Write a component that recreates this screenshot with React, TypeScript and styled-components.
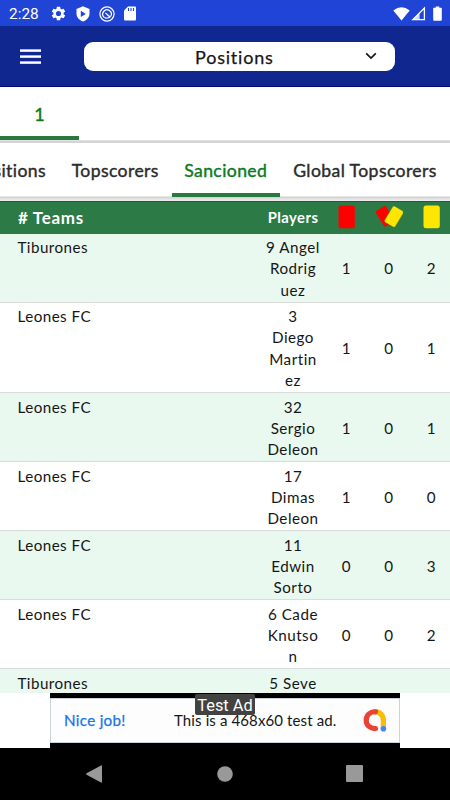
import React from "react";
import styled, { createGlobalStyle } from "styled-components";

const GlobalStyle = createGlobalStyle`
  * { box-sizing: border-box; }
  body { margin: 0; background: #fff; font-family: Lato, "Open Sans", sans-serif; color: #161616; }
`;

const Screen = styled.div`
  width: 450px;
  height: 800px;
  display: flex;
  flex-direction: column;
  overflow: hidden;
  background: #fff;
`;

const StatusBar = styled.div`
  height: 26px;
  flex: none;
  display: flex;
  align-items: center;
  justify-content: space-between;
  padding: 1px 8px 0 9px;
  background: #2044d6;
  color: #fff;
`;

const StatusGroup = styled.div<{ $gap: number }>`
  display: flex;
  align-items: center;
  gap: ${(p) => p.$gap}px;
  svg { display: block; }
`;

const Clock = styled.span`
  width: 32px;
  font: 400 15.4px/20px Roboto, sans-serif;
`;

const AppBar = styled.header`
  height: 61px;
  flex: none;
  display: flex;
  align-items: center;
  padding-left: 20px;
  background: #10278f;
  border-bottom: 1px solid #030a80;
`;

const MenuButton = styled.button`
  width: 21px;
  height: 15px;
  margin-top: 1px;
  display: flex;
  flex-direction: column;
  justify-content: space-between;
  padding: 0;
  border: 0;
  background: none;
`;

const MenuLine = styled.span`
  height: 3px;
  background: linear-gradient(#a8b1d8 1px, #fff 1px 2px, #d4d8ec 2px);
`;

const Select = styled.div`
  width: 311px;
  height: 29px;
  margin-left: 43px;
  padding: 0 18px 0 111px;
  display: flex;
  align-items: center;
  justify-content: space-between;
  border-radius: 9px;
  background: #fff;
`;

const SelectLabel = styled.span`
  padding-top: 2px;
  font-size: 18px;
  line-height: 28px;
  letter-spacing: 0.8px;
  font-weight: 400;
  -webkit-text-stroke: 0.25px #161616;
  white-space: nowrap;
`;

const GroupBar = styled.div`
  height: 56px;
  flex: none;
  display: flex;
  padding-bottom: 3px;
  background: linear-gradient(#fff 53px, #ececec 53px, #c9c9c9 55px, #e2e2e2);
`;

const GroupTab = styled.div`
  width: 79px;
  height: 53px;
  margin-right: auto;
  border-bottom: 4px solid #27793f;
  color: #0c7a1d;
  font-size: 18px;
  font-weight: 400;
  line-height: 54px;
  text-align: center;
  -webkit-text-stroke: 0.4px #0c7a1d;
`;

const TabBar = styled.nav`
  height: 58px;
  flex: none;
  display: flex;
  padding-bottom: 4px;
  background: linear-gradient(#fff 53px, #cfcfcf 54px, #e3e3e3 56px, #f0f0f0);
`;

const Tab = styled.div<{ $width: number; $active?: boolean }>`
  width: ${(p) => p.$width}px;
  height: 54px;
  flex: none;
  display: flex;
  justify-content: center;
  border-bottom: 4px solid ${(p) => (p.$active ? "#27793f" : "transparent")};
  color: ${(p) => (p.$active ? "#0c7a1d" : "#2b2b2b")};
  -webkit-text-stroke: 0.4px ${(p) => (p.$active ? "#0c7a1d" : "#2b2b2b")};
  font-size: 17.6px;
  font-weight: 400;
  line-height: 56px;
  letter-spacing: 0.4px;
  white-space: nowrap;
  &:first-child { justify-content: flex-end; padding-right: 12.5px; }
`;

const columns = "261px 64px 42.6px 42.6px 42.6px";

const HeaderRow = styled.div`
  height: 32.6px;
  flex: none;
  display: grid;
  grid-template-columns: ${columns};
  align-items: center;
  padding-bottom: 1px;
  background: #2c7a45;
  border-top: 1px solid #0b6b1d;
  color: #fff;
  font-weight: 700;
  svg { display: block; margin: 0 auto; }
`;

const TeamsHeading = styled.div`
  padding-left: 18px;
  font-size: 17px;
  letter-spacing: 0.7px;
`;

const PlayersHeading = styled.div`
  text-align: center;
  font-size: 14.8px;
  letter-spacing: 0.45px;
`;

const TableBody = styled.div`
  height: 459.4px;
  flex: none;
  overflow: hidden;
`;

const Row = styled.div<{ $striped: boolean }>`
  display: grid;
  grid-template-columns: ${columns};
  padding: 3.6px 0 0.9px;
  border-bottom: 1px solid #d9dcda;
  background: ${(p) => (p.$striped ? "#e9f9ef" : "#fff")};
  font-size: 15.2px;
  line-height: 21.2px;
  letter-spacing: 0.5px;
`;

const TeamCell = styled.div`
  padding-left: 17.5px;
  letter-spacing: 0.45px;
`;

const PlayerCell = styled.div`
  text-align: center;
  white-space: pre-line;
`;

const CountCell = styled.div`
  align-self: center;
  text-align: center;
`;

const AdStrip = styled.div`
  height: 55px;
  flex: none;
  display: flex;
  justify-content: center;
  background: #fff;
`;

const AdFrame = styled.div`
  position: relative;
  width: 350px;
  height: 55px;
  padding: 5px 0;
  background: #000;
`;

const AdBanner = styled.div`
  height: 45px;
  display: flex;
  align-items: center;
  padding: 0 12px 0 13px;
  border: 1px solid #c9d3da;
  background: #fdfdfe;
  svg { margin-left: auto; }
`;

const AdHeadline = styled.span`
  width: 110px;
  color: #1a73e8;
  font: 400 15.2px/20px Lato, sans-serif;
  letter-spacing: 0.3px;
  -webkit-text-stroke: 0.25px #1a73e8;
`;

const AdCopy = styled.span`
  font: 400 15px/20px Lato, sans-serif;
  letter-spacing: 0.12px;
  white-space: nowrap;
`;

const AdTag = styled.span`
  position: absolute;
  left: 145px;
  top: 1px;
  width: 60px;
  height: 21px;
  border-radius: 2px;
  background: #424242;
  color: #fff;
  font: 400 16.4px/23px Roboto, sans-serif;
  text-align: center;
`;

const NavBar = styled.footer`
  height: 52px;
  flex: none;
  display: flex;
  align-items: center;
  justify-content: space-between;
  padding: 0 87px 0 86px;
  background: #000;
`;

const records = [
  { team: "Tiburones", player: "9 Angel\nRodrig\nuez", counts: [1, 0, 2] },
  { team: "Leones FC", player: "3\nDiego\nMartin\nez", counts: [1, 0, 1] },
  { team: "Leones FC", player: "32\nSergio\nDeleon", counts: [1, 0, 1] },
  { team: "Leones FC", player: "17\nDimas\nDeleon", counts: [1, 0, 0] },
  { team: "Leones FC", player: "11\nEdwin\nSorto", counts: [0, 0, 3] },
  { team: "Leones FC", player: "6 Cade\nKnutso\nn", counts: [0, 0, 2] },
  { team: "Tiburones", player: "5 Seve\n", counts: [] },
];

const GearIcon = () => (
  <svg width="17" height="17" viewBox="0 0 24 24" fill="#fff">
    <path d="M19.14 12.94c.04-.3.06-.61.06-.94s-.02-.64-.07-.94l2.03-1.58a.49.49 0 0 0 .12-.61l-1.92-3.32a.49.49 0 0 0-.59-.22l-2.39.96a7 7 0 0 0-1.62-.94l-.36-2.54a.48.48 0 0 0-.48-.41h-3.84a.47.47 0 0 0-.47.41l-.36 2.54a7.4 7.4 0 0 0-1.62.94l-2.39-.96a.48.48 0 0 0-.59.22L2.74 8.87a.47.47 0 0 0 .12.61l2.03 1.58a6 6 0 0 0 0 1.88l-2.03 1.58a.49.49 0 0 0-.12.61l1.92 3.32c.12.22.37.29.59.22l2.39-.96c.5.38 1.03.7 1.62.94l.36 2.54c.05.24.24.41.48.41h3.84c.24 0 .44-.17.47-.41l.36-2.54a7 7 0 0 0 1.62-.94l2.39.96c.22.08.47 0 .59-.22l1.92-3.32a.47.47 0 0 0-.12-.61zM12 15.6a3.6 3.6 0 1 1 0-7.2 3.6 3.6 0 0 1 0 7.2z" />
  </svg>
);

const ShieldIcon = () => (
  <svg width="14" height="16" viewBox="0 0 14 16">
    <path d="M7 .3 13.5 3v4.6c0 3.7-2.7 6.7-6.5 8-3.8-1.3-6.5-4.3-6.5-8V3z" fill="#fff" />
    <path d="M4.8 4.8v6.1l5-3z" fill="#2044d6" />
  </svg>
);

const CompassIcon = () => (
  <svg width="16" height="16" viewBox="0 0 16 16" fill="none" stroke="#fff">
    <circle cx="8" cy="8" r="7.1" strokeWidth="1.2" />
    <path d="M5 11.2A4.3 4.3 0 1 1 11.9 10" strokeWidth="1.3" />
    <path d="M6.2 7.2c1.7 0 2.6 2.8 5 3.6-1.6 1.4-4.4 1.6-5.9.4" strokeWidth="1.3" />
  </svg>
);

const CardIcon = () => (
  <svg width="12" height="15" viewBox="0 0 12 15">
    <path d="M4 .5h7q1 0 1 1v12q0 1-1 1H1q-1 0-1-1v-9z" fill="#fff" />
    <path d="M4.5 2v3M7 2v3M9.5 2v3" stroke="#2044d6" strokeWidth="1.1" />
  </svg>
);

const WifiIcon = () => (
  <svg width="17" height="14" viewBox="0 0 17 14">
    <path d="M.3 3.5Q8.5-3 16.7 3.5L8.5 13.5z" fill="#fff" />
  </svg>
);

const SignalIcon = () => (
  <svg width="15" height="15" viewBox="0 0 15 15">
    <path d="M1.8 13.7 13.4 2.1v11.6z" fill="none" stroke="#fff" strokeWidth="1.3" />
    <path d="m1 14 7.6-7.6V14z" fill="#fff" opacity=".8" />
  </svg>
);

const BatteryIcon = () => (
  <svg width="9" height="15" viewBox="0 0 9 15">
    <path d="M2.7.5h3.6v1.3H8q.8 0 .8.8V14q0 .7-.8.7H1q-.8 0-.8-.7V2.6q0-.8.8-.8h1.7z" fill="#fff" />
  </svg>
);

const BookingCard = ({ color }: { color: string }) => (
  <svg width="17" height="24" viewBox="0 0 17 24">
    <rect x=".5" y=".5" width="16.3" height="22.8" rx="2.5" fill={color} />
  </svg>
);

const DoubleCard = () => (
  <svg width="28" height="24" viewBox="0 0 28 24">
    <rect x="4" y="2" width="12" height="18.5" rx="1.8" fill="#f00" transform="rotate(-32 10 11.25)" />
    <rect x="12.8" y="2.2" width="12.4" height="18.8" rx="2" fill="#ffe600" stroke="#2c7a45" strokeWidth=".4" transform="rotate(31 19 11.6)" />
  </svg>
);

export default function App() {
  return (
    <Screen>
      <GlobalStyle />
      <StatusBar>
        <StatusGroup $gap={9}>
          <Clock>2:28</Clock>
          <GearIcon />
          <ShieldIcon />
          <CompassIcon />
          <CardIcon />
        </StatusGroup>
        <StatusGroup $gap={7}>
          <StatusGroup $gap={1}>
            <WifiIcon />
            <SignalIcon />
          </StatusGroup>
          <BatteryIcon />
        </StatusGroup>
      </StatusBar>
      <AppBar>
        <MenuButton aria-label="Menu">
          <MenuLine />
          <MenuLine />
          <MenuLine />
        </MenuButton>
        <Select>
          <SelectLabel>Positions</SelectLabel>
          <svg width="12" height="8" viewBox="0 0 12 8" fill="none">
            <path d="m1.2 1.3 4.8 4.8 4.8-4.8" stroke="#161616" strokeWidth="1.7" />
          </svg>
        </Select>
      </AppBar>
      <GroupBar>
        <GroupTab>1</GroupTab>
      </GroupBar>
      <TabBar>
        <Tab $width={58.5}>Positions</Tab>
        <Tab $width={113.5}>Topscorers</Tab>
        <Tab $width={107.5} $active>Sancioned</Tab>
        <Tab $width={171}>Global Topscorers</Tab>
      </TabBar>
      <HeaderRow>
        <TeamsHeading># Teams</TeamsHeading>
        <PlayersHeading>Players</PlayersHeading>
        <BookingCard color="#f00" />
        <DoubleCard />
        <BookingCard color="#ffe600" />
      </HeaderRow>
      <TableBody>
        {records.map((record, i) => (
          <Row key={i} $striped={i % 2 === 0}>
            <TeamCell>{record.team}</TeamCell>
            <PlayerCell>{record.player}</PlayerCell>
            {record.counts.map((count, j) => (
              <CountCell key={j}>{count}</CountCell>
            ))}
          </Row>
        ))}
      </TableBody>
      <AdStrip>
        <AdFrame>
          <AdBanner>
            <AdHeadline>Nice job!</AdHeadline>
            <AdCopy>This is a 468x60 test ad.</AdCopy>
            <svg width="24" height="24" viewBox="0 0 24 24" fill="none" strokeWidth="5.2" strokeLinecap="round">
              <path d="M12 3.7a8.4 8.4 0 0 1 8.4 8.4v8" stroke="#fbbc04" />
              <path d="M12.5 3.8a8.4 8.4 0 1 0 0 16.7" stroke="#ea4335" />
              <circle cx="20.4" cy="20.8" r="2.8" fill="#4285f4" />
            </svg>
          </AdBanner>
          <AdTag>Test Ad</AdTag>
        </AdFrame>
      </AdStrip>
      <NavBar>
        <svg width="16" height="18" viewBox="0 0 16 18">
          <path d="M15 .5q1-.5 1 .6v15.8q0 1.1-1 .6L.6 9.7q-1-.7 0-1.4z" fill="#999" />
        </svg>
        <svg width="17" height="16" viewBox="0 0 17 16">
          <circle cx="9" cy="8" r="7.8" fill="#999" />
        </svg>
        <svg width="17" height="17" viewBox="0 0 17 17">
          <rect width="17" height="17" rx="1" fill="#999" />
        </svg>
      </NavBar>
    </Screen>
  );
}
